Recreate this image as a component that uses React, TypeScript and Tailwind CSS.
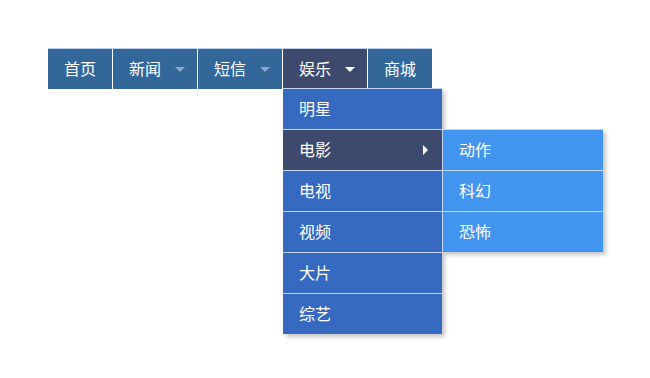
import React from "react";

const font = { fontFamily: '"Noto Sans CJK SC", "Noto Sans", sans-serif' };

function DownArrow({ color }: { color: string }) {
  return (
    <span
      className="inline-block w-0 h-0 border-l-[5px] border-r-[5px] border-t-[5px] border-l-transparent border-r-transparent"
      style={{ borderTopColor: color }}
    />
  );
}

export default function App() {
  const dropItems = ["明星", "电影", "电视", "视频", "大片", "综艺"];
  const subItems = ["动作", "科幻", "恐怖"];
  return (
    <div className="w-[650px] h-[378px] bg-white pt-[48px] pl-[48px] text-white text-[16px]" style={font}>
      <div className="flex w-fit border-t border-[#bccfeb] h-[41px]">
        <div className="w-[64px] h-[40px] bg-[#336699] flex items-center justify-center pb-[2px]">首页</div>
        <div className="w-px h-[40px] bg-white" />
        <div className="w-[84px] h-[40px] bg-[#336699] flex items-center pl-[16px]">
          <span className="pb-[2px]">新闻</span>
          <span className="ml-[14px] flex"><DownArrow color="#8ea8cc" /></span>
        </div>
        <div className="w-px h-[40px] bg-white" />
        <div className="w-[84px] h-[40px] bg-[#336699] flex items-center pl-[16px]">
          <span className="pb-[2px]">短信</span>
          <span className="ml-[14px] flex"><DownArrow color="#8ea8cc" /></span>
        </div>
        <div className="w-px h-[40px] bg-white" />
        <div className="relative w-[84px] h-[40px] bg-[#3d4a6d] flex items-center pl-[16px]">
          <span className="pb-[2px]">娱乐</span>
          <span className="ml-[14px] flex"><DownArrow color="#ffffff" /></span>
          <div className="absolute left-0 top-[39px] w-[159px] shadow-[3px_3px_4px_rgba(0,0,0,0.22)]">
            {dropItems.map((t) => (
              <div
                key={t}
                className={`relative border-t border-[#c3d5f2] h-[41px] flex items-center pl-[16px] ${
                  t === "电影" ? "bg-[#3d4a6d]" : "bg-[#3669c0]"
                }`}
              >
                <span className="pb-[2px]">{t}</span>
                {t === "电影" && (
                  <>
                    <span className="absolute left-[140px] top-[15px] w-0 h-0 border-t-[5px] border-b-[5px] border-l-[5px] border-t-transparent border-b-transparent border-l-white" />
                    <div className="absolute left-full top-[-1px] w-[161px] border-l border-[#c3d5f2] shadow-[3px_3px_4px_rgba(0,0,0,0.22)]">
                      {subItems.map((s) => (
                        <div
                          key={s}
                          className="border-t border-[#c3d5f2] h-[41px] flex items-center pl-[16px] bg-[#4195ee]"
                        >
                          <span className="pb-[2px]">{s}</span>
                        </div>
                      ))}
                    </div>
                  </>
                )}
              </div>
            ))}
          </div>
        </div>
        <div className="w-px h-[40px] bg-white" />
        <div className="w-[64px] h-[40px] bg-[#336699] flex items-center justify-center pb-[2px]">商城</div>
      </div>
    </div>
  );
}
